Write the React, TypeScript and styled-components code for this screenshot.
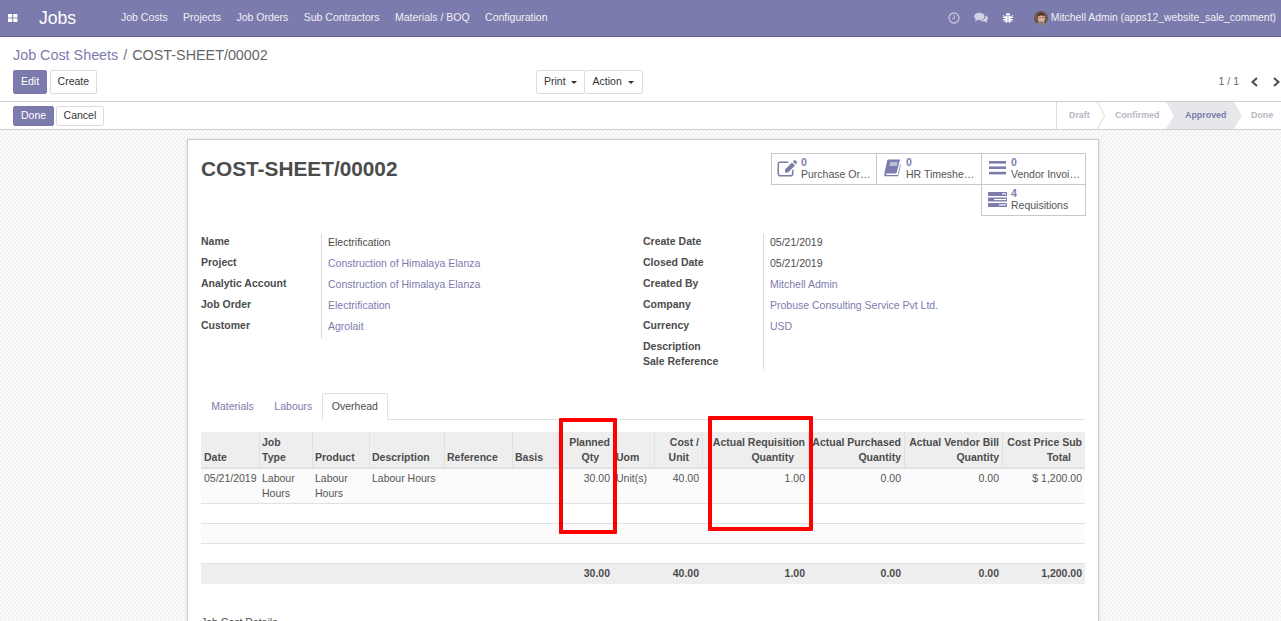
import React from 'react';
import styled, { createGlobalStyle } from 'styled-components';

const primary = '#7c7bad';

const GlobalStyle = createGlobalStyle`
  html, body {
    margin: 0;
    padding: 0;
    height: 100%;
    overflow: hidden;
  }
  body {
    font-family: "Liberation Sans", Arial, sans-serif;
    font-size: 10.5px;
    line-height: 1.5;
    color: #4c4c4c;
    background: #fff;
  }
  * { box-sizing: border-box; }
`;

const menus = ['Job Costs', 'Projects', 'Job Orders', 'Sub Contractors', 'Materials / BOQ', 'Configuration'];

const leftFields = [
  { label: 'Name', value: 'Electrification' },
  { label: 'Project', value: 'Construction of Himalaya Elanza', link: true },
  { label: 'Analytic Account', value: 'Construction of Himalaya Elanza', link: true },
  { label: 'Job Order', value: 'Electrification', link: true },
  { label: 'Customer', value: 'Agrolait', link: true },
];

const rightFields = [
  { label: 'Create Date', value: '05/21/2019' },
  { label: 'Closed Date', value: '05/21/2019' },
  { label: 'Created By', value: 'Mitchell Admin', link: true },
  { label: 'Company', value: 'Probuse Consulting Service Pvt Ltd.', link: true },
  { label: 'Currency', value: 'USD', link: true },
  { label: 'Description', value: '', tight: true },
  { label: 'Sale Reference', value: '', tight: true },
];

// tail = how far the second header line sits from the right edge
const columns = [
  { lines: ['Date'], width: 58 },
  { lines: ['Job', 'Type'], width: 53 },
  { lines: ['Product'], width: 57 },
  { lines: ['Description'], width: 75 },
  { lines: ['Reference'], width: 68 },
  { lines: ['Basis'], width: 46 },
  { lines: ['Planned', 'Qty'], width: 55, right: true, tail: 11 },
  { lines: ['Uom'], width: 41 },
  { lines: ['Cost /', 'Unit'], width: 48, right: true, tail: 10 },
  { lines: ['Actual Requisition', 'Quantity'], width: 106, right: true, tail: 11 },
  { lines: ['Actual Purchased', 'Quantity'], width: 96, right: true },
  { lines: ['Actual Vendor Bill', 'Quantity'], width: 98, right: true },
  { lines: ['Cost Price Sub', 'Total'], width: 83, right: true, tail: 11 },
];

const row = ['05/21/2019', 'Labour Hours', 'Labour Hours', 'Labour Hours', '', '', '30.00', 'Unit(s)', '40.00', '1.00', '0.00', '0.00', '$ 1,200.00'];
const totals = ['', '', '', '', '', '', '30.00', '', '40.00', '1.00', '0.00', '0.00', '1,200.00'];

const AppsIcon = () => (
  <svg width="10" height="10" viewBox="0 0 10 10" fill="#fff">
    <rect x="0" y="1" width="4.2" height="3.6" />
    <rect x="5.2" y="1" width="4.2" height="3.6" />
    <rect x="0" y="5.4" width="4.2" height="3.6" />
    <rect x="5.2" y="5.4" width="4.2" height="3.6" />
  </svg>
);

const ClockIcon = () => (
  <svg width="12" height="12" viewBox="0 0 12 12" fill="none" stroke="#c3c2d9" strokeWidth="1.3">
    <circle cx="6" cy="6" r="5" />
    <path d="M6.4 3v3.4H4" strokeWidth="1" />
  </svg>
);

const ChatIcon = () => (
  <svg width="14" height="12" viewBox="0 0 14 12" fill="#d3d2e4">
    <ellipse cx="5.4" cy="4.4" rx="5.2" ry="3.7" />
    <path d="M2 6.6 1 9.4l3.4-1.6zM11.6 3.4c1.4.6 2.4 1.7 2.4 2.9 0 1-.6 1.8-1.5 2.4l.9 2.2-3-1.6c-1.7.2-3.4-.3-4.3-1.3 3.2.1 6.3-1.7 5.5-4.6z" />
  </svg>
);

const BugIcon = () => (
  <svg width="10" height="12" viewBox="0 0 10 12" fill="#fff">
    <path d="M2.8 3.2a2.2 2.2 0 0 1 4.4 0z" />
    <rect x="2.2" y="3.8" width="2.5" height="6.8" rx="0.8" />
    <rect x="5.3" y="3.8" width="2.5" height="6.8" rx="0.8" />
    <path d="M0 3.2h1v1l1.4.8v1H0V5h1.4L0 4.2zM10 3.2H9v1l-1.4.8v1H10V5H8.6l1.4-.8zM0 7h2.2v1L1 9.6H0l1.2-1.8H0zM10 7H7.8v1L9 9.6h1L8.8 7.8H10z" />
  </svg>
);

const Avatar = () => (
  <svg width="14" height="14" viewBox="0 0 14 14">
    <circle cx="7" cy="7" r="7" fill="#6e5546" />
    <ellipse cx="7.4" cy="7.2" rx="3.6" ry="4.2" fill="#d9b199" />
    <path d="M3.4 5.6c0-2.8 2-3.8 4-3.8s3.4 1.3 3.2 3.8C9.4 4.2 6 4 3.4 5.6z" fill="#4a3428" />
    <path d="M4.6 6.6h2.2M8 6.6h2.2" stroke="#5b4438" strokeWidth="0.7" />
    <path d="M2.6 13c1-2 2.6-2.4 4.4-2.4s3.4.4 4.4 2.4A7 7 0 0 1 2.6 13z" fill="#8c8078" />
  </svg>
);

const ChevronIcon = ({ flip }: { flip?: boolean }) => (
  <svg width="9" height="10" viewBox="0 0 9 10" fill="none" stroke="#4c4c4c" strokeWidth="2">
    <path d={flip ? 'M2 1l4.5 4L2 9' : 'M7 1L2.5 5 7 9'} />
  </svg>
);

const EditIcon = () => (
  <svg width="20" height="17" viewBox="0 0 20 17" fill={primary}>
    <path d="M3 1.5h9L10.500 3H3.200C2.500 3 2 3.500 2 4.200v9.600c0 .7.500 1.200 1.200 1.200h10.600c.7 0 1.200-.5 1.200-1.200v-3.300l1.500-1.500v4.900c0 1.500-1.200 2.600-2.700 2.600H3.100C1.600 16.500.500 15.400.500 13.900V4.100C.500 2.600 1.500 1.500 3 1.500z" />
    <path d="M15 2.400l3 3L11 12.500H8v-3zM15.900 1.500L17.200.3c.3-.3.700-.3 1 0l1.600 1.500c.3.300.3.800 0 1.100L18.800 4.500z" />
  </svg>
);

const BookIcon = () => (
  <svg width="17" height="18" viewBox="0 0 17 18" fill={primary}>
    <path d="M4.500.5H16l-.3 1.300-3 11.700c-.2.600-.6 1-1.300 1H3c-.7 0-1 .4-1 .8s.3.700 1 .7h10.800l2.500-11 .6.800-2.500 10.700c-.1.500-.5.800-1 .8H2.800C1 17.800 0 16.600.3 15L3.100 1.800C3.300 1 3.800.5 4.500.5z" />
    <rect x="6" y="3.5" width="7.5" height="1" fill="#fff" />
    <rect x="5.5" y="5.5" width="7.5" height="1" fill="#fff" />
  </svg>
);

const BarsIcon = () => (
  <svg width="17" height="14" viewBox="0 0 17 14" fill={primary}>
    <rect x="0" y="0" width="17" height="2.6" />
    <rect x="0" y="5.4" width="17" height="2.6" />
    <rect x="0" y="10.8" width="17" height="2.6" />
  </svg>
);

const ServerIcon = () => (
  <svg width="19" height="15" viewBox="0 0 19 15" fill={primary}>
    <rect x="0" y="0" width="19" height="4" rx="0.5" />
    <rect x="0" y="5.5" width="19" height="4" rx="0.5" />
    <rect x="0" y="11" width="19" height="4" rx="0.5" />
    <rect x="14" y="1.3" width="4" height="1.2" fill="#fff" />
    <rect x="6" y="6.9" width="12" height="1.2" fill="#fff" />
    <rect x="11" y="12.3" width="7" height="1.2" fill="#fff" />
  </svg>
);

const App = () => (
  <Page>
    <GlobalStyle />
    <MainNav>
      <AppsToggle><AppsIcon /></AppsToggle>
      <Brand>Jobs</Brand>
      <MenuList>
        {menus.map((menu) => <MenuItem key={menu}>{menu}</MenuItem>)}
      </MenuList>
      <Systray>
        <TrayIcon><ClockIcon /></TrayIcon>
        <TrayIcon><ChatIcon /></TrayIcon>
        <TrayIcon><BugIcon /></TrayIcon>
        <UserMenu><Avatar />Mitchell Admin (apps12_website_sale_comment)</UserMenu>
      </Systray>
    </MainNav>

    <ControlPanel>
      <Breadcrumb><CrumbLink>Job Cost Sheets</CrumbLink><CrumbSep>/</CrumbSep>COST-SHEET/00002</Breadcrumb>
      <ControlRow>
        <ButtonGroup>
          <PrimaryButton>Edit</PrimaryButton>
          <DefaultButton>Create</DefaultButton>
        </ButtonGroup>
        <SideBar>
          <DropButton>Print<Caret /></DropButton>
          <DropButton $joined>Action<Caret /></DropButton>
        </SideBar>
        <Pager>
          <PagerValue>1 / 1</PagerValue>
          <ChevronIcon />
          <ChevronIcon flip />
        </Pager>
      </ControlRow>
    </ControlPanel>

    <StatusHeader>
      <HeaderButtons>
        <PrimaryButton $small>Done</PrimaryButton>
        <DefaultButton $small>Cancel</DefaultButton>
      </HeaderButtons>
      <StatusBar>
        <Step $width={40} $pad={12} $chevron>Draft</Step>
        <Step $width={69} $pad={18}>Confirmed</Step>
        <ActiveStep>Approved</ActiveStep>
        <Step $width={48} $pad={18}>Done</Step>
      </StatusBar>
    </StatusHeader>

    <Content>
      <Sheet>
        <SheetTop>
          <SheetTitle>COST-SHEET/00002</SheetTitle>
          <StatButtons>
            <StatButton><IconSlot><EditIcon /></IconSlot><StatText><StatValue>0</StatValue><StatLabel>Purchase Or…</StatLabel></StatText></StatButton>
            <StatButton><IconSlot><BookIcon /></IconSlot><StatText><StatValue>0</StatValue><StatLabel>HR Timeshe…</StatLabel></StatText></StatButton>
            <StatButton><IconSlot><BarsIcon /></IconSlot><StatText><StatValue>0</StatValue><StatLabel>Vendor Invoi…</StatLabel></StatText></StatButton>
            <StatButton><IconSlot><ServerIcon /></IconSlot><StatText><StatValue>4</StatValue><StatLabel>Requisitions</StatLabel></StatText></StatButton>
          </StatButtons>
        </SheetTop>

        <FieldColumns>
          <FieldGroup>
            {leftFields.map((f) => (
              <FieldRow key={f.label}>
                <FieldLabel>{f.label}</FieldLabel>
                <FieldValue $link={f.link}>{f.value}</FieldValue>
              </FieldRow>
            ))}
          </FieldGroup>
          <FieldGroup>
            {rightFields.map((f) => (
              <FieldRow key={f.label} $tight={f.tight}>
                <FieldLabel>{f.label}</FieldLabel>
                <FieldValue $link={f.link}>{f.value}</FieldValue>
              </FieldRow>
            ))}
          </FieldGroup>
        </FieldColumns>

        <Tabs>
          <Tab>Materials</Tab>
          <Tab>Labours</Tab>
          <Tab $active>Overhead</Tab>
        </Tabs>

        <TableWrap>
          <ListTable>
            <colgroup>
              {columns.map((c) => <col key={c.lines[0]} style={{ width: c.width }} />)}
            </colgroup>
            <thead>
              <tr>
                {columns.map((c) => (
                  <HeadCell key={c.lines[0]} $right={c.right}>
                    {c.lines.map((line, i) => (
                      <HeadLine key={line} $tail={i === 1 ? c.tail : 0}>{line}</HeadLine>
                    ))}
                  </HeadCell>
                ))}
              </tr>
            </thead>
            <tbody>
              <DataRow $odd>
                {row.map((v, i) => <DataCell key={i} $right={columns[i].right}>{v}</DataCell>)}
              </DataRow>
              <EmptyRow><td colSpan={13} /></EmptyRow>
              <EmptyRow $odd><td colSpan={13} /></EmptyRow>
              <EmptyRow><td colSpan={13} /></EmptyRow>
            </tbody>
            <tfoot>
              <tr>
                {totals.map((v, i) => <FootCell key={i} $right={columns[i].right}>{v}</FootCell>)}
              </tr>
            </tfoot>
          </ListTable>
          <Highlight $left={358} $top={-14} $width={58} $height={116} />
          <Highlight $left={507} $top={-16} $width={105} $height={115} />
        </TableWrap>
        <DetailTitle>Job Cost Details</DetailTitle>
      </Sheet>
    </Content>
  </Page>
);

export default App;

const Page = styled.div`
  height: 621px;
  display: flex;
  flex-direction: column;
  overflow: hidden;
`;

const MainNav = styled.header`
  height: 37px;
  flex: none;
  display: flex;
  align-items: center;
  background: ${primary};
  border-bottom: 1px solid #5f5e97;
  color: #fff;
`;

const AppsToggle = styled.span`
  display: flex;
  width: 39px;
  padding-left: 8px;
`;

const Brand = styled.span`
  width: 82px;
  font-size: 17.6px;
  color: #fff;
`;

const MenuList = styled.nav`
  display: flex;
  gap: 15.4px;
  color: #f0f0f6;
`;

const MenuItem = styled.span`
  white-space: nowrap;
`;

const Systray = styled.div`
  margin-left: auto;
  display: flex;
  align-items: center;
  padding-right: 5px;
  font-size: 10.4px;
`;

const TrayIcon = styled.span`
  display: flex;
  justify-content: center;
  width: 27px;
`;

const UserMenu = styled.span`
  display: flex;
  align-items: center;
  gap: 3px;
  margin-left: 12.5px;
  color: #f0f0f6;
  white-space: nowrap;
`;

const ControlPanel = styled.div`
  height: 65px;
  flex: none;
  padding: 7px 0 0 13px;
  background: #fff;
  border-bottom: 1px solid #cfcfcf;
`;

const Breadcrumb = styled.div`
  font-size: 14.35px;
  line-height: 22px;
  color: #666;
`;

const CrumbLink = styled.span`
  color: ${primary};
`;

const CrumbSep = styled.span`
  padding: 0 5px;
  color: #777;
`;

const ControlRow = styled.div`
  display: grid;
  grid-template-columns: 523px 1fr auto;
  align-items: center;
  margin-top: 4px;
`;

const ButtonGroup = styled.div`
  display: flex;
  gap: 3px;
`;

const PrimaryButton = styled.button<{ $small?: boolean }>`
  height: ${(p) => (p.$small ? '20px' : '24px')};
  padding: 0 7px;
  min-width: 34px;
  font: inherit;
  color: #fff;
  background: ${primary};
  border: 1px solid ${primary};
  border-radius: 2px;
`;

const DefaultButton = styled.button<{ $small?: boolean }>`
  height: ${(p) => (p.$small ? '20px' : '24px')};
  padding: 0 6.5px;
  font: inherit;
  color: #333;
  background: #fff;
  border: 1px solid #dcdcdc;
  border-radius: 2px;
`;

const SideBar = styled.div`
  display: flex;
  justify-self: start;
`;

const DropButton = styled.button<{ $joined?: boolean }>`
  height: 24px;
  display: flex;
  align-items: center;
  gap: ${(p) => (p.$joined ? '6px' : '5px')};
  padding: 0 ${(p) => (p.$joined ? '8px' : '7px')};
  font: inherit;
  color: #333;
  background: #fff;
  border: 1px solid #dcdcdc;
  margin-left: ${(p) => (p.$joined ? '-1px' : '0')};
  border-radius: 2px;
`;

const Caret = styled.i`
  width: 0;
  height: 0;
  border-top: 3.5px solid #333;
  border-left: 3.5px solid transparent;
  border-right: 3.5px solid transparent;
`;

const Pager = styled.div`
  display: flex;
  align-items: center;
  gap: 13px;
  color: #666;
`;

const PagerValue = styled.span`
  margin-right: -2px;
`;

const StatusHeader = styled.div`
  height: 28px;
  flex: none;
  display: flex;
  align-items: center;
  justify-content: space-between;
  padding-left: 13px;
  background: #fff;
  border-bottom: 1px solid #cfcfcf;
`;

const HeaderButtons = styled.div`
  display: flex;
  gap: 2px;
`;

const StatusBar = styled.div`
  display: flex;
  align-self: stretch;
  border-left: 1px solid #dcdcdc;
  font-size: 8.9px;
  font-weight: 700;
`;

const Step = styled.span<{ $width: number; $pad: number; $chevron?: boolean }>`
  position: relative;
  display: flex;
  align-items: center;
  flex: none;
  width: ${(p) => p.$width}px;
  padding-left: ${(p) => p.$pad}px;
  color: #b5b9c3;
  &::after {
    content: '';
    display: ${(p) => (p.$chevron ? 'block' : 'none')};
    position: absolute;
    top: 0;
    right: -8px;
    width: 8px;
    height: 100%;
    background: #dcdcdc;
    clip-path: polygon(0 0, 1px 0, 100% 50%, 1px 100%, 0 100%, calc(100% - 1px) 50%);
  }
`;

const ActiveStep = styled.span`
  position: relative;
  z-index: 1;
  display: flex;
  align-items: center;
  flex: none;
  width: 76px;
  margin-right: -9px;
  padding-left: 19px;
  color: ${primary};
  background: #e6e7ea;
  clip-path: polygon(0 0, 68px 0, 100% 50%, 68px 100%, 0 100%, 8px 50%);
`;

const Content = styled.main`
  flex: 1;
  min-height: 0;
  overflow: hidden;
  background: conic-gradient(#f2f2f2 25%, #fafafa 0 50%, #f2f2f2 0 75%, #fafafa 0) 0 0 / 4px 4px;
  padding: 9px 182px 0 187px;
`;

const Sheet = styled.section`
  min-height: 600px;
  padding: 13px 13px 0;
  background: #fff;
  border: 1px solid #c8c8d0;
  box-shadow: 0 1px 3px rgba(0, 0, 0, 0.1);
`;

const SheetTop = styled.div`
  display: flex;
  justify-content: space-between;
  align-items: flex-start;
  height: 81px;
`;

const SheetTitle = styled.h1`
  margin: 0;
  font-size: 20.8px;
  line-height: 32px;
  font-weight: 700;
  color: #4c4c4c;
`;

const StatButtons = styled.div`
  display: grid;
  grid-template-columns: 105px 105px 104px;
  grid-auto-rows: 31px;
  width: 314px;
  & > :nth-child(4) {
    grid-column: 3;
  }
`;

const StatButton = styled.div`
  display: flex;
  align-items: center;
  margin: 0 -1px -1px 0;
  padding: 0 0 2px 5px;
  border: 1px solid #c8c8c8;
  background: #fff;
`;

const IconSlot = styled.span`
  flex: none;
  display: flex;
  justify-content: center;
  width: 20px;
  margin-right: 4px;
`;

const StatText = styled.div`
  min-width: 0;
  line-height: 12px;
`;

const StatValue = styled.div`
  color: ${primary};
  font-weight: 700;
`;

const StatLabel = styled.div`
  color: #555;
  white-space: nowrap;
`;

const FieldColumns = styled.div`
  display: grid;
  grid-template-columns: 442px 1fr;
`;

const FieldGroup = styled.div`
  display: flex;
  flex-direction: column;
`;

const FieldRow = styled.div<{ $tight?: boolean }>`
  display: grid;
  grid-template-columns: 120px 1fr;
  height: ${(p) => (p.$tight ? '15px' : '21px')};
`;

const FieldLabel = styled.div`
  line-height: 15px;
  font-weight: 700;
  color: #4c4c4c;
`;

const FieldValue = styled.div<{ $link?: boolean }>`
  border-left: 1px solid #d9d9d9;
  padding: 0 6px;
  line-height: 17px;
  color: ${(p) => (p.$link ? primary : '#4c4c4c')};
`;

const Tabs = styled.div`
  display: flex;
  align-items: flex-end;
  height: 27px;
  margin-top: 24px;
  border-bottom: 1px solid #dee2e6;
`;

const Tab = styled.span<{ $active?: boolean }>`
  height: 27px;
  margin-bottom: -1px;
  margin-left: ${(p) => (p.$active ? '-1px' : '0')};
  padding: 0 ${(p) => (p.$active ? '9.25px' : '10.25px')};
  display: flex;
  align-items: center;
  color: ${(p) => (p.$active ? '#4c4c4c' : primary)};
  background: #fff;
  border: ${(p) => (p.$active ? '1px solid #dee2e6' : 'none')};
  border-bottom-color: #fff;
  border-radius: 2px 2px 0 0;
`;

const TableWrap = styled.div`
  position: relative;
  margin-top: 12px;
`;

const ListTable = styled.table`
  width: 884px;
  table-layout: fixed;
  border-collapse: separate;
  border-spacing: 0;
  line-height: 15px;
`;

const HeadCell = styled.th<{ $right?: boolean }>`
  height: 37px;
  padding: 3px 3px 2px;
  vertical-align: bottom;
  text-align: ${(p) => (p.$right ? 'right' : 'left')};
  font-weight: 700;
  color: #4c4c4c;
  background: #eee;
  box-shadow: inset 1px 0 0 #dee2e6;
  border-bottom: 2px solid #dee2e6;
  &:first-child {
    box-shadow: none;
  }
`;

const HeadLine = styled.div<{ $tail?: number }>`
  white-space: nowrap;
  padding-right: ${(p) => p.$tail || 0}px;
`;

const DataRow = styled.tr<{ $odd?: boolean }>`
  background: ${(p) => (p.$odd ? '#fbfbfb' : '#fff')};
`;

const DataCell = styled.td<{ $right?: boolean }>`
  height: 35px;
  padding: 2px 3px;
  vertical-align: top;
  text-align: ${(p) => (p.$right ? 'right' : 'left')};
  color: #555;
  border-bottom: 1px solid #dee2e6;
`;

const EmptyRow = styled.tr<{ $odd?: boolean }>`
  height: 20px;
  background: ${(p) => (p.$odd ? '#fbfbfb' : '#fff')};
  & > td {
    padding: 0;
    border-bottom: 1px solid #dee2e6;
  }
`;

const FootCell = styled.td<{ $right?: boolean }>`
  height: 20px;
  padding: 0 3px 1px;
  text-align: ${(p) => (p.$right ? 'right' : 'left')};
  font-weight: 700;
  color: #4c4c4c;
  background: #eee;
`;

const Highlight = styled.div<{ $left: number; $top: number; $width: number; $height: number }>`
  position: absolute;
  left: ${(p) => p.$left}px;
  top: ${(p) => p.$top}px;
  width: ${(p) => p.$width}px;
  height: ${(p) => p.$height}px;
  border: 4px solid #ff0000;
  border-radius: 1px;
  pointer-events: none;
`;

const DetailTitle = styled.div`
  margin-top: 31px;
  line-height: 15px;
  color: #4c4c4c;
`;
